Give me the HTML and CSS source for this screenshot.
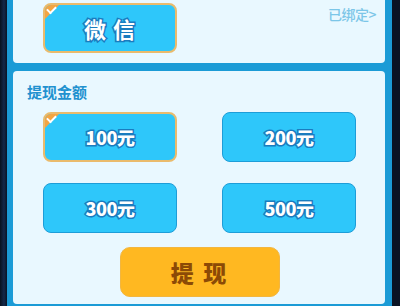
FILE: index.html
```
<!DOCTYPE html>
<html lang="zh">
<head>
<meta charset="utf-8">
<link rel="stylesheet" href="styles.css">
</head>
<body>
<div class="page">
  <div class="frame">
    <section class="card card-top">
      <div class="grid">
        <button class="opt opt-big selected">微 信</button>
      </div>
      <span class="bound">已绑定&gt;</span>
    </section>
    <section class="card card-main">
      <h2 class="title">提现金额</h2>
      <div class="grid amounts">
        <button class="opt selected">100元</button>
        <button class="opt">200元</button>
        <button class="opt">300元</button>
        <button class="opt">500元</button>
      </div>
      <div class="submit-row">
        <button class="submit">提 现</button>
      </div>
    </section>
  </div>
</div>
</body>
</html>
```
FILE: styles.css
```
html, body {
  margin: 0;
  padding: 0;
  width: 400px;
  height: 306px;
  overflow: hidden;
  background: #0c1a2e;
  font-family: "Noto Sans CJK SC", "Noto Sans", sans-serif;
}
.page {
  height: 306px;
  padding: 0 8px 0 7px;
  box-sizing: border-box;
  background: linear-gradient(90deg, #08121f 0, #13294a 4px, #0a1424 7px);
}
.frame {
  height: 306px;
  box-sizing: border-box;
  background: #1b9bd6;
  padding: 0 7px 2px 6px;
  display: flex;
  flex-direction: column;
  gap: 8px;
}
.card {
  background: #e9f8ff;
  border-radius: 4px;
  box-sizing: border-box;
  position: relative;
}
.card-top {
  border-radius: 0 0 4px 4px;
  height: 63px;
  padding: 3px 30px 0;
}
.card-main {
  flex: 1;
  padding: 11px 30px 0;
}
.grid {
  display: grid;
  grid-template-columns: 134px 134px;
  column-gap: 45px;
  row-gap: 21px;
}
.bound {
  position: absolute;
  right: 9px;
  top: 4px;
  font-size: 14px;
  color: #7cc6e8;
  font-weight: 500;
  letter-spacing: -0.5px;
}
.title {
  margin: 0 0 0 -16px;
  font-size: 15px;
  font-weight: 700;
  color: #2191cf;
  line-height: 20px;
  height: 30px;
}
.opt {
  position: relative;
  height: 50px;
  border: 1px solid #1d9dd8;
  border-radius: 8px;
  background: #2ec7fa;
  color: #fff;
  font-family: "Noto Sans CJK SC", sans-serif;
  font-size: 18px;
  font-weight: 900;
  padding: 0;
  -webkit-text-stroke: 3px #1a7cbf;
  paint-order: stroke fill;
  overflow: hidden;
  letter-spacing: -0.5px;
}
.opt-big {
  font-size: 22px;
  letter-spacing: 1px;
  font-weight: 700;
}
.opt.selected {
  border: 2px solid #eabb6c;
}
.opt.selected::before {
  content: "";
  position: absolute;
  left: -2px;
  top: -2px;
  width: 0;
  height: 0;
  border-style: solid;
  border-width: 18px 18px 0 0;
  border-color: #f3a543 transparent transparent transparent;
}
.opt.selected::after {
  content: "";
  position: absolute;
  left: 2px;
  top: 1px;
  width: 7px;
  height: 4px;
  border-left: 2px solid #fff;
  border-bottom: 2px solid #fff;
  transform: rotate(-45deg);
}
.submit-row {
  display: flex;
  justify-content: center;
  margin-top: 14px;
  padding-left: 1px;
}
.submit {
  width: 160px;
  height: 50px;
  border: 1px solid #f2b640;
  border-radius: 10px;
  background: #ffb821;
  color: #8c4a06;
  font-family: "Noto Sans CJK SC", sans-serif;
  font-size: 23px;
  font-weight: 900;
  letter-spacing: 2px;
  padding: 0;
}
```
